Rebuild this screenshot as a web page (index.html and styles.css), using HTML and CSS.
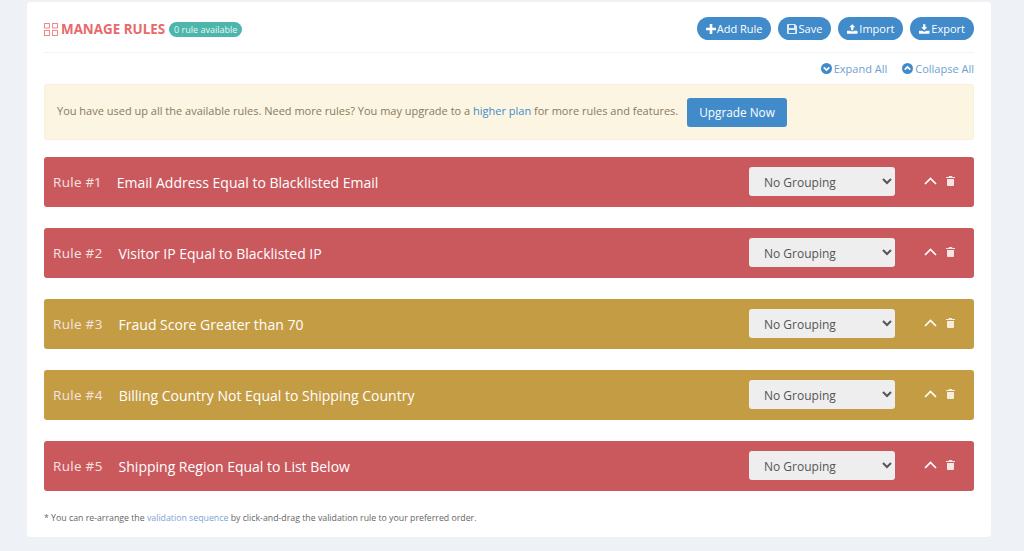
FILE: index.html
```html
<!DOCTYPE html>
<html lang="en">
<head>
<meta charset="utf-8">
<title>Manage Rules</title>
<link rel="stylesheet" href="styles.css">
</head>
<body>
<main class="card">
  <header class="head">
    <div class="title-wrap">
      <svg class="grid-icon" viewBox="0 0 14 13" width="14" height="13"><g fill="none" stroke="#ee8a87" stroke-width="1"><rect x=".5" y=".5" width="5" height="4.500"/><rect x="8.500" y=".5" width="5" height="4.500"/><rect x=".5" y="7.500" width="5" height="5"/><rect x="8.500" y="7.500" width="5" height="5"/></g></svg>
      <h1 class="title">MANAGE RULES</h1>
      <span class="badge">0 rule available</span>
    </div>
    <div class="actions">
      <a class="pill pill-add"><svg viewBox="0 0 10 10" width="10" height="10"><path fill="#fff" d="M3.700 0h2.600v3.700H10v2.600H6.300V10H3.700V6.300H0V3.700h3.700z"/></svg>Add Rule</a>
      <a class="pill pill-save"><svg viewBox="0 0 10 10" width="10" height="10"><path fill="#dfeaf5" fill-rule="evenodd" d="M1 0h7l2 2v7a1 1 0 0 1-1 1H1a1 1 0 0 1-1-1V1a1 1 0 0 1 1-1zm1 1v3h5V1zm-.2 5v3h6.400V6z"/></svg>Save</a>
      <a class="pill pill-load"><svg viewBox="0 0 12 11" width="10.500" height="10"><path fill="#fff" d="M6 0l3.500 3.500H7.300V7H4.700V3.500H2.500zM0 7.500h3.700V8h4.600v-.5H12V11H0z"/></svg>Import</a>
      <a class="pill pill-load"><svg viewBox="0 0 12 11" width="10.500" height="10"><path fill="#fff" d="M4.700 0h2.600v3.500h2.200L6 7 2.500 3.500h2.200zM0 7.500h3.200L6 8.500l2.800-1H12V11H0z"/></svg>Export</a>
    </div>
  </header>

  <div class="toggles">
    <a class="toggle"><svg viewBox="0 0 12 12" width="11" height="11"><circle cx="6" cy="6" r="6" fill="#428bca"/><path d="M3 4.800l3 3 3-3" fill="none" stroke="#fff" stroke-width="1.800"/></svg>Expand All</a>
    <a class="toggle"><svg viewBox="0 0 12 12" width="11" height="11"><circle cx="6" cy="6" r="6" fill="#428bca"/><path d="M3 7.200l3-3 3 3" fill="none" stroke="#fff" stroke-width="1.800"/></svg>Collapse All</a>
  </div>

  <div class="alert">
    <p class="alert-text">You have used up all the available rules. Need more rules? You may upgrade to a <a class="link">higher plan</a> for more rules and features.</p>
    <a class="upgrade">Upgrade Now</a>
  </div>

  <section class="rules">
    <article class="rule red">
      <div class="rule-name"><span class="num">Rule #1</span><span class="label">Email Address Equal to Blacklisted Email</span></div>
      <select class="group"><option>No Grouping</option></select>
      <div class="tools">
        <svg class="chev" viewBox="0 0 13 8" width="13" height="8"><path d="M1 7l5.500-5.500L12 7" fill="none" stroke="#fff" stroke-width="1.700"/></svg>
        <svg class="trash" viewBox="0 0 9 10" width="9" height="10"><path fill="#f7e5e3" d="M3 0h3l.5 1H9v1H0V1h2.500zM1 3h7v6a1 1 0 0 1-1 1H2a1 1 0 0 1-1-1z"/></svg>
      </div>
    </article>
    <article class="rule red">
      <div class="rule-name"><span class="num">Rule #2</span><span class="label">Visitor IP Equal to Blacklisted IP</span></div>
      <select class="group"><option>No Grouping</option></select>
      <div class="tools">
        <svg class="chev" viewBox="0 0 13 8" width="13" height="8"><path d="M1 7l5.500-5.500L12 7" fill="none" stroke="#fff" stroke-width="1.700"/></svg>
        <svg class="trash" viewBox="0 0 9 10" width="9" height="10"><path fill="#f7e5e3" d="M3 0h3l.5 1H9v1H0V1h2.500zM1 3h7v6a1 1 0 0 1-1 1H2a1 1 0 0 1-1-1z"/></svg>
      </div>
    </article>
    <article class="rule gold">
      <div class="rule-name"><span class="num">Rule #3</span><span class="label">Fraud Score Greater than 70</span></div>
      <select class="group"><option>No Grouping</option></select>
      <div class="tools">
        <svg class="chev" viewBox="0 0 13 8" width="13" height="8"><path d="M1 7l5.500-5.500L12 7" fill="none" stroke="#fff" stroke-width="1.700"/></svg>
        <svg class="trash" viewBox="0 0 9 10" width="9" height="10"><path fill="#f6eedc" d="M3 0h3l.5 1H9v1H0V1h2.500zM1 3h7v6a1 1 0 0 1-1 1H2a1 1 0 0 1-1-1z"/></svg>
      </div>
    </article>
    <article class="rule gold">
      <div class="rule-name"><span class="num">Rule #4</span><span class="label">Billing Country Not Equal to Shipping Country</span></div>
      <select class="group"><option>No Grouping</option></select>
      <div class="tools">
        <svg class="chev" viewBox="0 0 13 8" width="13" height="8"><path d="M1 7l5.500-5.500L12 7" fill="none" stroke="#fff" stroke-width="1.700"/></svg>
        <svg class="trash" viewBox="0 0 9 10" width="9" height="10"><path fill="#f6eedc" d="M3 0h3l.5 1H9v1H0V1h2.500zM1 3h7v6a1 1 0 0 1-1 1H2a1 1 0 0 1-1-1z"/></svg>
      </div>
    </article>
    <article class="rule red">
      <div class="rule-name"><span class="num">Rule #5</span><span class="label">Shipping Region Equal to List Below</span></div>
      <select class="group"><option>No Grouping</option></select>
      <div class="tools">
        <svg class="chev" viewBox="0 0 13 8" width="13" height="8"><path d="M1 7l5.500-5.500L12 7" fill="none" stroke="#fff" stroke-width="1.700"/></svg>
        <svg class="trash" viewBox="0 0 9 10" width="9" height="10"><path fill="#f7e5e3" d="M3 0h3l.5 1H9v1H0V1h2.500zM1 3h7v6a1 1 0 0 1-1 1H2a1 1 0 0 1-1-1z"/></svg>
      </div>
    </article>
  </section>

  <p class="note">* You can re-arrange the <a class="note-link">validation sequence</a> by click-and-drag the validation rule to your preferred order.</p>
</main>
</body>
</html>
```
FILE: styles.css
```css
* { box-sizing: border-box; }
html, body { height: 100%; }
body {
  margin: 0;
  background: #eef1f6;
  font-family: "Open Sans", sans-serif;
  overflow: hidden;
}
.card {
  width: 964px;
  height: 535px;
  margin: 2px 0 0 27px;
  padding: 15px 17px 0;
  background: #fff;
  border-radius: 4px;
}
.head {
  display: flex;
  justify-content: space-between;
  align-items: flex-start;
  height: 36px;
  border-bottom: 1px solid #f2f3f5;
}
.title-wrap {
  display: flex;
  align-items: center;
  height: 24px;
}
.grid-icon { margin-right: 3px; }
.title {
  margin: 0 4px 0 0;
  font-size: 13.400px;
  font-weight: 700;
  line-height: 24px;
  color: #e8696a;
}
.badge {
  height: 15px;
  padding: 0 5px;
  border-radius: 8px;
  background: #4cb6ac;
  color: #e9f6f4;
  font-size: 9px;
  line-height: 15px;
  margin-top: 1px;
}
.actions { display: flex; gap: 7px; }
.pill {
  display: flex;
  align-items: center;
  gap: 0;
  height: 23px;
  padding: 0 9px;
  border-radius: 12px;
  background: #428bca;
  color: #fff;
  font-size: 11px;
}
.pill-add { gap: 1px; padding-right: 8px; }
.pill-save { gap: 2px; }
.pill-load { gap: 1.500px; }
.toggles {
  display: flex;
  justify-content: flex-end;
  gap: 15px;
  height: 31px;
  padding-top: 8px;
}
.toggle {
  display: flex;
  align-items: center;
  gap: 2px;
  height: 15px;
  color: #6f9fd0;
  font-size: 11px;
}
.alert {
  display: flex;
  align-items: center;
  gap: 9px;
  height: 56px;
  padding: 0 12px;
  background: #fcf5e2;
  border: 1px solid #f8f0d8;
  border-radius: 3px;
}
.alert-text {
  margin: 0 0 4px;
  font-size: 11px;
  color: #8a7a5e;
}
.link { color: #428bca; }
.upgrade {
  display: block;
  height: 29px;
  padding: 0 12px;
  background: #428bca;
  border-radius: 3px;
  color: #fff;
  font-size: 11.800px;
  line-height: 29px;
}
.rules {
  display: flex;
  flex-direction: column;
  gap: 21px;
  margin-top: 17px;
}
.rule {
  display: flex;
  align-items: center;
  height: 50px;
  padding: 0 9px;
  border-radius: 3px;
  color: #fff;
}
.red { background: #ca595d; }
.gold { background: #c49c44; }
.rule-name {
  flex: 1;
  display: flex;
  align-items: center;
  gap: 16px;
}
.num {
  font-size: 13.500px;
  font-variant-numeric: proportional-nums;
  letter-spacing: .3px;
  color: #f6e2e0;
}
.label { font-size: 14px; }
.group {
  width: 146px;
  height: 29px;
  margin-bottom: 1px;
  padding: 2px 11px 0;
  border: 0;
  border-radius: 3px;
  background-color: #eeeeee;
  color: #555;
  font-family: "Open Sans", sans-serif;
  font-size: 12px;
}
.tools {
  display: flex;
  align-items: center;
  gap: 9px;
  flex: none;
  width: 41px;
  height: 29px;
  margin-left: 29px;
  padding-bottom: 3px;
}
.note {
  margin: 22px 0 0;
  font-size: 8.780px;
  line-height: 11px;
  color: #666;
}
.note-link { color: #7ba3d4; }
```
